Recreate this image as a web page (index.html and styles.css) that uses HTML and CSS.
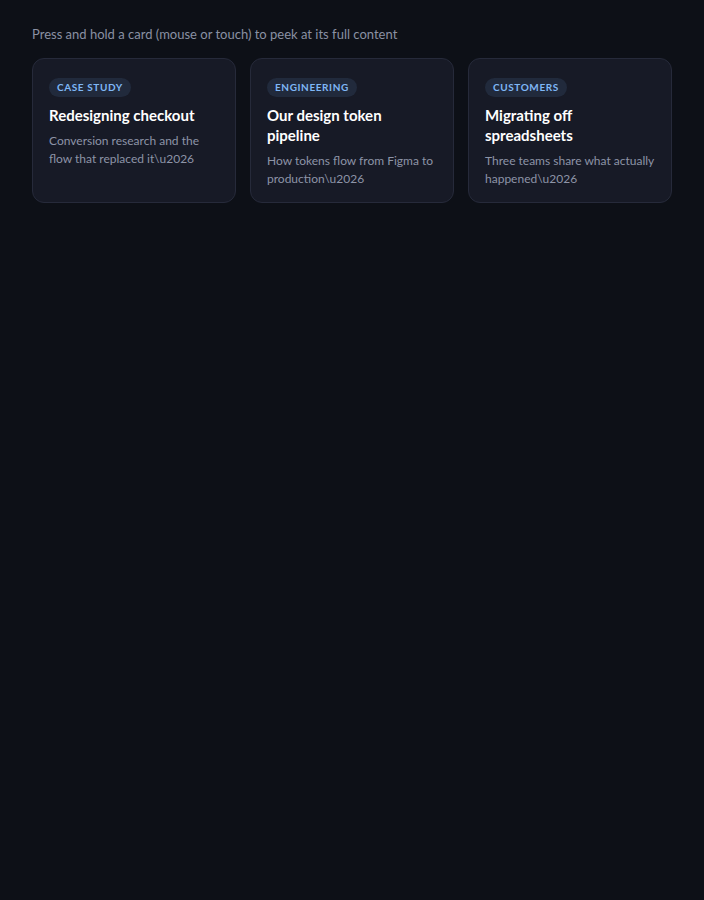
FILE: index.html
```html
<!DOCTYPE html>
<html lang="en">
<head>
    <meta charset="UTF-8">
    <title>Peek cards</title>
    <link rel="stylesheet" href="styles.css">
</head>
<body>

    <p class="hint">Press and hold a card (mouse or touch) to peek at its full content</p>

    <div class="cards">
        <div class="card">
            <span class="tag">Case study</span>
            <h3 class="card-title">Redesigning checkout</h3>
            <p class="card-desc">Conversion research and the flow that replaced it\u2026</p>
        </div>
        <div class="card">
            <span class="tag">Engineering</span>
            <h3 class="card-title">Our design token pipeline</h3>
            <p class="card-desc">How tokens flow from Figma to production\u2026</p>
        </div>
        <div class="card">
            <span class="tag">Customers</span>
            <h3 class="card-title">Migrating off spreadsheets</h3>
            <p class="card-desc">Three teams share what actually happened\u2026</p>
        </div>
    </div>

</body>
</html>
```

FILE: styles.css
```css
body {
    background-color: #0d1017;
    font-family: Lato, sans-serif;
    margin: 0;
    padding: 24px 32px;
    color: #e6e8ee;
}

.hint {
    margin: 0 0 14px;
    font-size: 13px;
    line-height: 20px;
    color: #8a91a3;
}

.cards {
    display: grid;
    grid-template-columns: repeat(3, 1fr);
    gap: 14px;
}

.card {
    display: flex;
    flex-direction: column;
    align-items: flex-start;
    background: #171a26;
    border: 1px solid #262a3a;
    border-radius: 12px;
    padding: 19px 16px 14px;
    cursor: pointer;
}

.tag {
    padding: 0 8px;
    height: 19px;
    line-height: 19px;
    border-radius: 10px;
    background: #212a3c;
    color: #7fb7f6;
    font-size: 10px;
    font-weight: bold;
    letter-spacing: 0.6px;
    text-transform: uppercase;
}

.card-title {
    margin: 8px 0 7px;
    font-size: 15px;
    line-height: 20px;
    font-weight: bold;
    color: #ffffff;
}

.card-desc {
    margin: 0;
    font-size: 12px;
    line-height: 18px;
    color: #8d94a7;
}
```
